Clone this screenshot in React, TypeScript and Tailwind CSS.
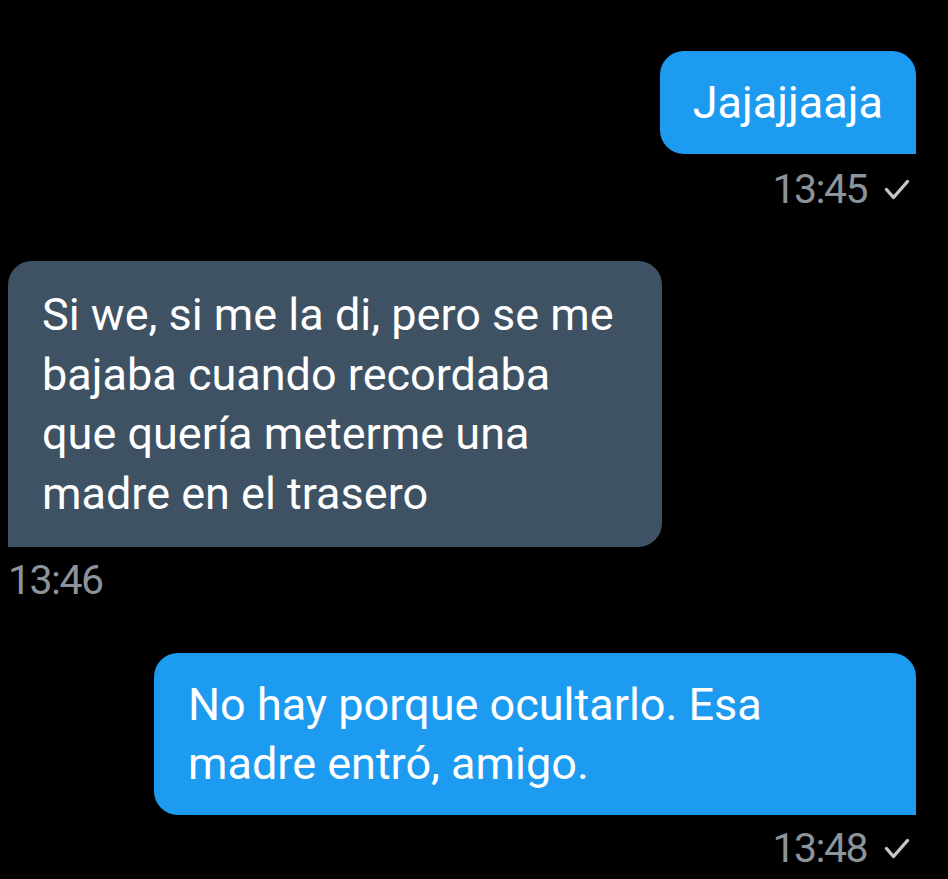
import React from 'react';

const Check: React.FC = () => (
  <svg width="26" height="22" viewBox="0 0 26 22" className="ml-[17px] mr-[6px]">
    <path d="M2.5 10.5 L9.5 18.5 L23.5 2.5" fill="none" stroke="#c3c7cb" strokeWidth="3.4" strokeLinecap="round" strokeLinejoin="round" />
  </svg>
);

const App: React.FC = () => {
  return (
    <div className="w-[948px] h-[879px] bg-black overflow-hidden text-white" style={{ fontFamily: 'Roboto, "Noto Sans", sans-serif' }}>
      <div className="flex flex-col pt-[51px]">
        {/* sent */}
        <div className="flex justify-end pr-[32px]">
          <div className="bg-[#1d9bf0] rounded-[24px] rounded-br-none px-[33px] py-[22px] text-[45px] leading-[59px]">
            Jajajjaaja
          </div>
        </div>
        <div className="flex justify-end items-center pr-[32px] mt-[16px] h-[40px] text-[41px] tracking-[-1.5px] text-[#8b939b]">
          <span>13:45</span>
          <Check />
        </div>

        {/* received */}
        <div className="flex pl-[8px] mt-[51px]">
          <div className="w-[654px] bg-[#3e5263] rounded-[24px] rounded-bl-none px-[34px] py-[24px] text-[45px] leading-[59.5px]">
            Si we, si me la di, pero se me<br />
            bajaba cuando recordaba<br />
            que quería meterme una<br />
            madre en el trasero
          </div>
        </div>
        <div className="flex items-center pl-[8px] mt-[14px] h-[40px] text-[41px] tracking-[-1.5px] text-[#8b939b]">
          <span>13:46</span>
        </div>

        {/* sent */}
        <div className="flex justify-end pr-[32px] mt-[52px]">
          <div className="w-[762px] bg-[#1d9bf0] rounded-[24px] rounded-br-none px-[34px] py-[22px] text-[45px] leading-[59px]">
            No hay porque ocultarlo. Esa<br />
            madre entró, amigo.
          </div>
        </div>
        <div className="flex justify-end items-center pr-[32px] mt-[14px] h-[40px] text-[41px] tracking-[-1.5px] text-[#8b939b]">
          <span>13:48</span>
          <Check />
        </div>
      </div>
    </div>
  );
};

export default App;
